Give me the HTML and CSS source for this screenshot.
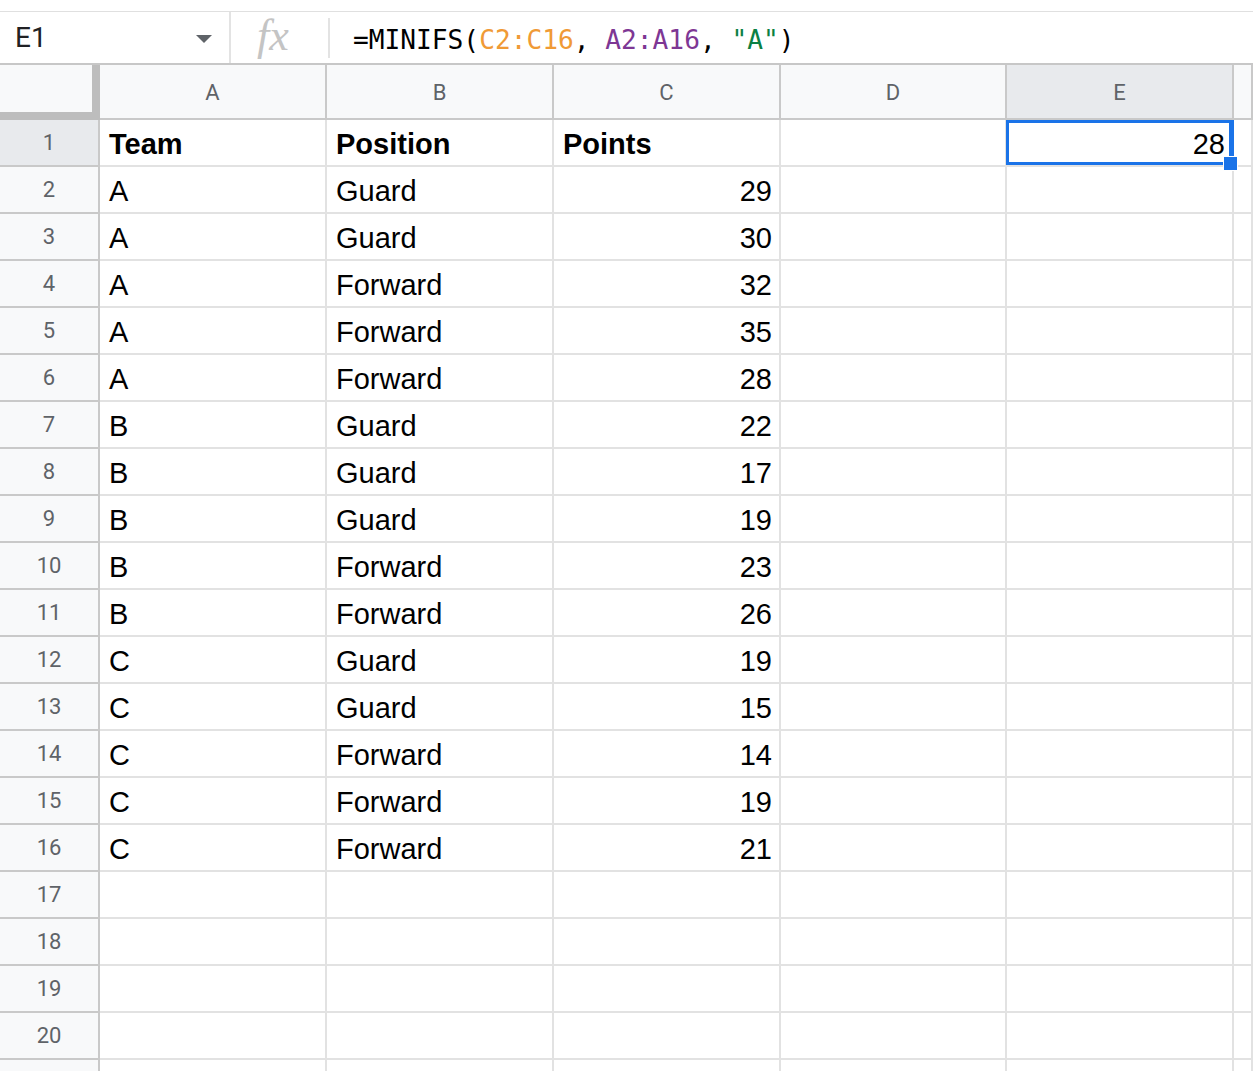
FILE: index.html
```html
<!DOCTYPE html>
<html lang="en">
<head>
    <meta charset="UTF-8">
    <title>MINIFS example</title>
    <link rel="stylesheet" href="styles.css">
</head>
<body>

    <!-- Formula bar -->
    <div class="formula-bar">
        <div class="name-box">
            <span class="cell-ref">E1</span>
            <svg class="caret" width="16" height="8" viewBox="0 0 16 8"><path d="M0 0h16L8 8z" fill="#5f6368"/></svg>
        </div>
        <div class="fx">fx</div>
        <div class="formula">=MINIFS(<span class="ref-c">C2:C16</span>, <span class="ref-a">A2:A16</span>, <span class="str">"A"</span>)</div>
    </div>

    <!-- Grid -->
    <div class="sheet">
        <div class="row head">
            <div class="corner"></div>
            <div class="col-head">A</div>
            <div class="col-head">B</div>
            <div class="col-head">C</div>
            <div class="col-head">D</div>
            <div class="col-head active">E</div>
            <div class="col-head"></div>
        </div>
        <div class="row">
            <div class="row-num active">1</div>
            <div class="cell bold">Team</div>
            <div class="cell bold">Position</div>
            <div class="cell bold">Points</div>
            <div class="cell"></div>
            <div class="cell num selected">28<span class="handle"></span></div>
            <div class="cell"></div>
        </div>
        <div class="row"><div class="row-num">2</div><div class="cell">A</div><div class="cell">Guard</div><div class="cell num">29</div><div class="cell"></div><div class="cell"></div><div class="cell"></div></div>
        <div class="row"><div class="row-num">3</div><div class="cell">A</div><div class="cell">Guard</div><div class="cell num">30</div><div class="cell"></div><div class="cell"></div><div class="cell"></div></div>
        <div class="row"><div class="row-num">4</div><div class="cell">A</div><div class="cell">Forward</div><div class="cell num">32</div><div class="cell"></div><div class="cell"></div><div class="cell"></div></div>
        <div class="row"><div class="row-num">5</div><div class="cell">A</div><div class="cell">Forward</div><div class="cell num">35</div><div class="cell"></div><div class="cell"></div><div class="cell"></div></div>
        <div class="row"><div class="row-num">6</div><div class="cell">A</div><div class="cell">Forward</div><div class="cell num">28</div><div class="cell"></div><div class="cell"></div><div class="cell"></div></div>
        <div class="row"><div class="row-num">7</div><div class="cell">B</div><div class="cell">Guard</div><div class="cell num">22</div><div class="cell"></div><div class="cell"></div><div class="cell"></div></div>
        <div class="row"><div class="row-num">8</div><div class="cell">B</div><div class="cell">Guard</div><div class="cell num">17</div><div class="cell"></div><div class="cell"></div><div class="cell"></div></div>
        <div class="row"><div class="row-num">9</div><div class="cell">B</div><div class="cell">Guard</div><div class="cell num">19</div><div class="cell"></div><div class="cell"></div><div class="cell"></div></div>
        <div class="row"><div class="row-num">10</div><div class="cell">B</div><div class="cell">Forward</div><div class="cell num">23</div><div class="cell"></div><div class="cell"></div><div class="cell"></div></div>
        <div class="row"><div class="row-num">11</div><div class="cell">B</div><div class="cell">Forward</div><div class="cell num">26</div><div class="cell"></div><div class="cell"></div><div class="cell"></div></div>
        <div class="row"><div class="row-num">12</div><div class="cell">C</div><div class="cell">Guard</div><div class="cell num">19</div><div class="cell"></div><div class="cell"></div><div class="cell"></div></div>
        <div class="row"><div class="row-num">13</div><div class="cell">C</div><div class="cell">Guard</div><div class="cell num">15</div><div class="cell"></div><div class="cell"></div><div class="cell"></div></div>
        <div class="row"><div class="row-num">14</div><div class="cell">C</div><div class="cell">Forward</div><div class="cell num">14</div><div class="cell"></div><div class="cell"></div><div class="cell"></div></div>
        <div class="row"><div class="row-num">15</div><div class="cell">C</div><div class="cell">Forward</div><div class="cell num">19</div><div class="cell"></div><div class="cell"></div><div class="cell"></div></div>
        <div class="row"><div class="row-num">16</div><div class="cell">C</div><div class="cell">Forward</div><div class="cell num">21</div><div class="cell"></div><div class="cell"></div><div class="cell"></div></div>
        <div class="row"><div class="row-num">17</div><div class="cell"></div><div class="cell"></div><div class="cell"></div><div class="cell"></div><div class="cell"></div><div class="cell"></div></div>
        <div class="row"><div class="row-num">18</div><div class="cell"></div><div class="cell"></div><div class="cell"></div><div class="cell"></div><div class="cell"></div><div class="cell"></div></div>
        <div class="row"><div class="row-num">19</div><div class="cell"></div><div class="cell"></div><div class="cell"></div><div class="cell"></div><div class="cell"></div><div class="cell"></div></div>
        <div class="row"><div class="row-num">20</div><div class="cell"></div><div class="cell"></div><div class="cell"></div><div class="cell"></div><div class="cell"></div><div class="cell"></div></div>
        <div class="row"><div class="row-num"></div><div class="cell"></div><div class="cell"></div><div class="cell"></div><div class="cell"></div><div class="cell"></div><div class="cell"></div></div>
    </div>

</body>
</html>
```

FILE: styles.css
```css
body {
    margin: 0;
    height: 1071px;
    overflow: hidden;
    background: #ffffff;
    font-family: "Liberation Sans", Arial, sans-serif;
}

/* Formula bar */
.formula-bar {
    display: flex;
    align-items: center;
    height: 54px;
    margin-top: 11px;
    border-top: 1px solid #e0e0e0;
    border-bottom: 2px solid #c7c7c7;
    box-sizing: border-box;
}

.name-box {
    display: flex;
    align-items: center;
    justify-content: space-between;
    width: 231px;
    height: 100%;
    box-sizing: border-box;
    padding: 0 17px 0 15px;
    border-right: 2px solid #e3e3e3;
}

.cell-ref {
    font-family: Roboto, sans-serif;
    font-size: 28px;
    color: #202124;
}

.caret {
    margin-top: 3px;
}

.fx {
    width: 99px;
    height: 40px;
    box-sizing: border-box;
    padding-left: 26px;
    border-right: 2px solid #e3e3e3;
    font-family: "Liberation Serif", serif;
    font-style: italic;
    font-size: 44px;
    line-height: 36px;
    color: #c4c4c4;
}

.formula {
    padding: 4px 0 0 23px;
    font-family: "DejaVu Sans Mono", "Liberation Mono", monospace;
    font-size: 26.2px;
    color: #000000;
    white-space: pre;
}

.ref-c { color: #f09a36; }
.ref-a { color: #7e3794; }
.str { color: #0b8043; }

/* Sheet grid */
.row {
    display: grid;
    grid-template-columns: 100px 227px 227px 227px 226px 227px 1fr;
    height: 47px;
}

.row.head {
    height: 55px;
}

.corner {
    background: #f8f9fa;
    border-right: 8px solid #bdbdbd;
    border-bottom: 8px solid #bdbdbd;
}

.col-head {
    display: flex;
    align-items: center;
    justify-content: center;
    padding-top: 2px;
    background: #f8f9fa;
    border-right: 2px solid #c9c9c9;
    border-bottom: 2px solid #c9c9c9;
    font-family: Roboto, sans-serif;
    font-size: 22px;
    color: #5f6368;
}

.col-head.active {
    background: #e8eaed;
}

.row-num {
    display: flex;
    align-items: center;
    justify-content: center;
    background: #f8f9fa;
    border-right: 2px solid #c9c9c9;
    border-bottom: 2px solid #c9c9c9;
    font-family: Roboto, sans-serif;
    font-size: 22px;
    color: #5f6368;
}

.row-num.active {
    background: #e8eaed;
}

.cell {
    position: relative;
    display: flex;
    align-items: flex-end;
    padding: 0 7px 4px 9px;
    border-right: 2px solid #e2e2e2;
    border-bottom: 2px solid #e2e2e2;
    font-size: 29px;
    line-height: 33px;
    color: #000000;
}

.cell.bold {
    font-weight: bold;
}

.cell.num {
    justify-content: flex-end;
}

/* Selected cell E1 */
.cell.selected {
    box-shadow: inset 0 0 0 3px #1a73e8;
    margin-left: -1px;
    padding-right: 7px;
    border-right: 2px solid #1a73e8;
}

.handle {
    position: absolute;
    right: -6px;
    bottom: -6px;
    width: 13px;
    height: 13px;
    background: #1a73e8;
    border: 1px solid #ffffff;
    z-index: 2;
}
```
